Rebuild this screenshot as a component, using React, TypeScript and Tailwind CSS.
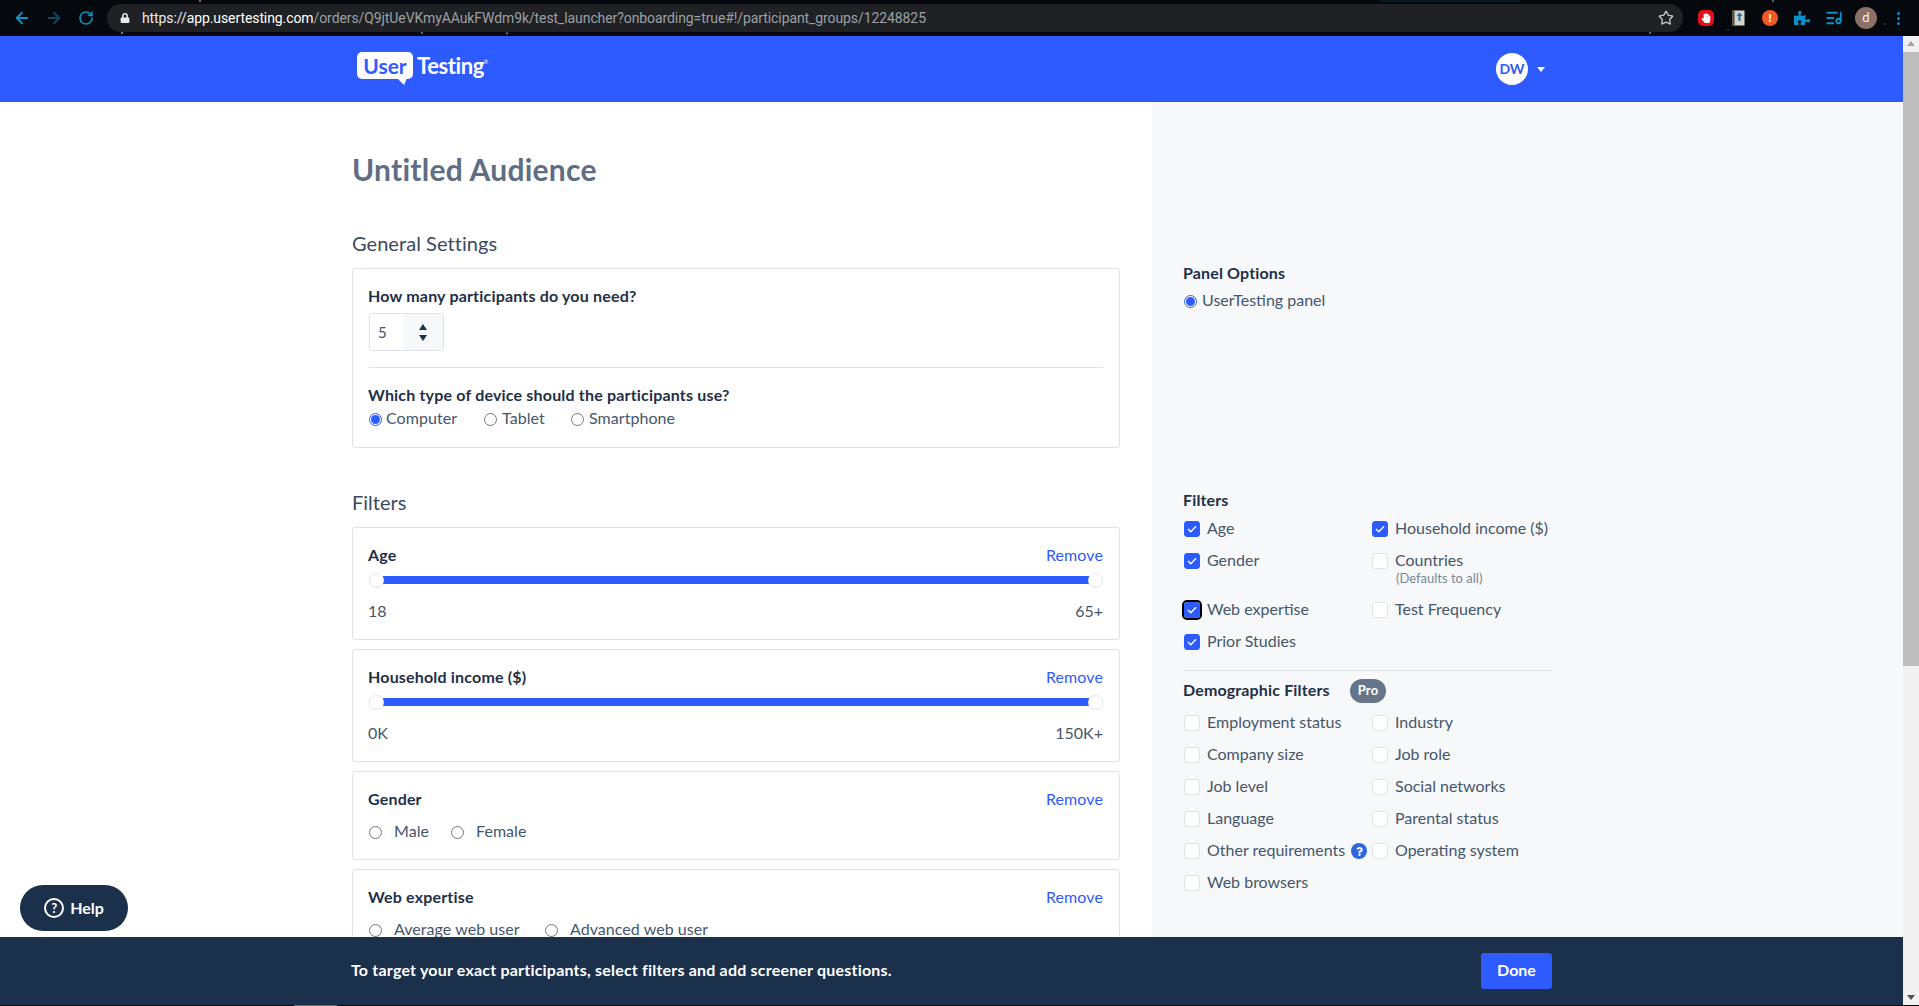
import React from "react";
import { ArrowLeft, ArrowRight, RotateCw, Star, ListMusic } from "lucide-react";
import { FaHandPaper, FaPuzzlePiece, FaLock, FaQuestion } from "react-icons/fa";

const font = "font-['Lato','Liberation_Sans',sans-serif]";

function Radio({ on = false }: { on?: boolean }) {
  return on ? (
    <span className="flex h-[13px] w-[13px] shrink-0 items-center justify-center rounded-full border border-[#2e5bff] bg-white">
      <span className="h-[9px] w-[9px] rounded-full bg-[#2e5bff]" />
    </span>
  ) : (
    <span className="h-[13px] w-[13px] shrink-0 rounded-full border border-[#6f7885] bg-white" />
  );
}

function Check({ on = false, focus = false }: { on?: boolean; focus?: boolean }) {
  return (
    <span
      className={`flex h-4 w-4 shrink-0 items-center justify-center rounded-[3px] border ${
        on ? "border-[#2e5bff] bg-[#2e5bff]" : "border-[#dfe3e9] bg-white"
      } ${focus ? "outline-2 outline-black outline-offset-0" : ""}`}
    >
      {on && (
        <svg width="10" height="8" viewBox="0 0 10 8" fill="none">
          <path d="M1 4l2.8 2.8L9 1.2" stroke="white" strokeWidth="1.3" />
        </svg>
      )}
    </span>
  );
}

function CheckRow({ label, on, focus, sub, help }: { label: string; on?: boolean; focus?: boolean; sub?: string; help?: boolean }) {
  return (
    <div>
      <div className="flex h-5 items-center">
        <Check on={on} focus={focus} />
        <span className="ml-[7px] pb-0.5 whitespace-nowrap text-[16px] leading-5 text-[#46566b]">{label}</span>
        {help && (
          <span className="absolute ml-[167px] flex h-4 w-4 items-center justify-center rounded-full bg-[#2e66e0] text-white">
            <FaQuestion size={9} />
          </span>
        )}
      </div>
      {sub && <div className="ml-6 h-4 -translate-y-px text-[13px] leading-4 text-[#7b8797]">{sub}</div>}
    </div>
  );
}

function Card({ title, children, remove = true, last = false, tall = false }: { title?: string; children: React.ReactNode; remove?: boolean; last?: boolean; tall?: boolean }) {
  return (
    <div className={`${last ? "" : "mb-[9px]"} rounded-[3px] border border-[#dfe3e9] bg-white px-4 pt-[18px] ${tall ? "pb-[18px]" : "pb-[17px]"}`}>
      {title && (
        <div className="flex h-5 items-center justify-between pb-0.5 text-[16px] leading-5">
          <span className="-ml-px font-bold tracking-[0.18px] text-[#1f3047]">{title}</span>
          {remove && <span className="tracking-[0.1px] text-[#2e5bff]">Remove</span>}
        </div>
      )}
      {children}
    </div>
  );
}

function Slider({ low, high }: { low: string; high: string }) {
  return (
    <>
      <div className="mt-1.5 flex h-4 items-center">
        <span className="z-10 h-[15px] w-[15px] shrink-0 rounded-full border border-[#dfe3e9] bg-white" />
        <span className="-mx-px h-2 flex-1 bg-[#2e5bff]" />
        <span className="z-10 h-[15px] w-[15px] shrink-0 rounded-full border border-[#dfe3e9] bg-white" />
      </div>
      <div className="mt-3.5 flex h-5 items-center justify-between pb-0.5 text-[16px] text-[#46566b]">
        <span className="-ml-px">{low}</span>
        <span>{high}</span>
      </div>
    </>
  );
}

function RadioOption({ label, on, width, gap = "ml-1" }: { label: string; on?: boolean; width: string; gap?: string }) {
  return (
    <div className={`flex items-center ${width}`}>
      <Radio on={on} />
      <span className={`${gap} pb-0.5 whitespace-nowrap text-[16px] tracking-[0.05px] text-[#46566b]`}>{label}</span>
    </div>
  );
}

function Slot({ children }: { children: React.ReactNode }) {
  return <span className="flex w-8 shrink-0 items-center justify-center">{children}</span>;
}

export default function App() {
  const demo: [string, boolean?][] = [
    ["Employment status"],
    ["Industry"],
    ["Company size"],
    ["Job role"],
    ["Job level"],
    ["Social networks"],
    ["Language"],
    ["Parental status"],
    ["Other requirements", true],
    ["Operating system"],
    ["Web browsers"],
  ];
  return (
    <div className={`flex h-[1006px] w-full flex-col overflow-hidden bg-[#05090e] ${font}`}>
      {/* Browser toolbar */}
      <div className="relative flex h-9 shrink-0 items-center bg-[#05090e]">
        <svg className="absolute inset-0" width="1919" height="36" viewBox="0 0 1919 36">
          <circle cx="200" cy="1" r="1" fill="#8a9299" />
          <circle cx="122" cy="33" r="1" fill="#9aa3aa" />
          <circle cx="422" cy="33" r="1" fill="#7d868d" />
          <circle cx="507" cy="33.5" r="1" fill="#8a9299" />
          <circle cx="1650" cy="33" r="1" fill="#7d868d" />
          <circle cx="1773" cy="1" r="1" fill="#71808a" />
          <circle cx="1840" cy="20" r="0.8" fill="#5a6a75" />
          <circle cx="1885" cy="24" r="0.8" fill="#5a6a75" />
          <circle cx="1728" cy="30" r="0.7" fill="#4d5d68" />
          <rect x="1380" y="0" width="140" height="2" fill="#0c2a33" opacity="0.6" />
        </svg>
        <div className="relative ml-[13px] flex w-[94px] items-center">
          <ArrowLeft size={18} strokeWidth={2.4} className="text-[#0f8fc4]" />
          <ArrowRight size={18} strokeWidth={2.4} className="ml-[14px] text-[#0b4a63]" />
          <RotateCw size={16} strokeWidth={2.4} className="ml-[15px] text-[#0f8fc4]" />
        </div>
        <div className="relative flex h-7 w-[1576px] items-center rounded-full bg-[#202124] pl-[13px] font-['Roboto',sans-serif] text-[14px] tracking-[-0.09px]">
          <FaLock size={10} className="text-[#e8eaed]" />
          <span className="ml-3 whitespace-nowrap">
            <span className="text-[#e8eaed]">https://</span>
            <span className="text-white">app.usertesting.com</span>
            <span className="text-[#9aa0a6]">/orders/Q9jtUeVKmyAAukFWdm9k/test_launcher?onboarding=true#!/participant_groups/12248825</span>
          </span>
          <Star size={16} className="mr-[9px] ml-auto text-[#c4c7c9]" />
        </div>
        <div className="relative ml-[7px] flex flex-1 items-center">
          <Slot>
            <span className="flex h-4 w-4 items-center justify-center rounded-[5px] bg-[#e3101a] text-white">
              <FaHandPaper size={10} />
            </span>
          </Slot>
          <Slot>
            <svg width="13" height="16" viewBox="0 0 13 16">
              <rect x="0.5" y="0.5" width="12" height="15" fill="#d9d3c4" />
              <rect x="0.5" y="0.5" width="2" height="15" fill="#4c4a44" />
              <path d="M7.5 2.5l3 3.5H8.5V11h-2V6H4.5z" fill="#0f6fb0" />
            </svg>
          </Slot>
          <Slot>
            <span className="flex h-4 w-4 items-center justify-center rounded-full bg-[#f15a24] text-[12px] font-bold text-white">!</span>
          </Slot>
          <Slot>
            <FaPuzzlePiece size={16} className="text-[#0a8fc9]" />
          </Slot>
          <Slot>
            <ListMusic size={18} strokeWidth={2.4} className="text-[#0a8fc9]" />
          </Slot>
          <Slot>
            <span className="flex h-[22px] w-[22px] items-center justify-center rounded-full bg-[#8d7065] text-[13px] text-[#f1ece9]">d</span>
          </Slot>
          <Slot>
            <span className="flex flex-col gap-[2px]">
              <span className="h-[3px] w-[3px] rounded-full bg-[#0a8fc9]" />
              <span className="h-[3px] w-[3px] rounded-full bg-[#0a8fc9]" />
              <span className="h-[3px] w-[3px] rounded-full bg-[#0a8fc9]" />
            </span>
          </Slot>
        </div>
      </div>

      <div className="flex min-h-0 flex-1">
        {/* Page */}
        <div className="relative flex min-w-0 flex-1 flex-col overflow-hidden bg-white">
          <header className="flex h-[66px] shrink-0 items-center bg-[#2e5bff] pr-[358px] pl-[357px]">
            <div className="relative mb-[7px] flex h-[27px] w-[56px] items-center justify-center rounded-[5px] bg-white">
              <span className="text-[21px] leading-none font-bold text-[#2e5bff]">User</span>
              <svg className="absolute right-[6px] -bottom-[6px]" width="10" height="7" viewBox="0 0 10 7">
                <path d="M0 0h10L7 7z" fill="white" />
              </svg>
            </div>
            <span className="mb-[7px] ml-1 text-[22px] font-bold tracking-[-0.4px] text-white">Testing</span>
            <span className="mb-[14px] text-[5px] leading-none text-white">®</span>
            <div className="ml-auto flex items-center">
              <span className="flex h-8 w-8 items-center justify-center rounded-full bg-white pb-0.5 text-[14px] font-bold text-[#2e5bff]">DW</span>
              <svg className="ml-[9px]" width="8" height="5" viewBox="0 0 8 5">
                <path d="M0 0h8L4 5z" fill="white" />
              </svg>
            </div>
          </header>

          <div className="flex min-h-0 flex-1">
            {/* Left column */}
            <div className="w-[1152px] shrink-0 overflow-hidden pr-[32px] pl-[352px]">
              <h1 className="mt-[47px] h-10 text-[30px] leading-10 font-bold tracking-[0.25px] text-[#5e6e84]">Untitled Audience</h1>
              <h2 className="mt-10 mb-[11px] h-7 text-[20px] leading-7 tracking-[0.05px] text-[#3c4a5e]">General Settings</h2>
              <Card last tall>
                <div className="-ml-px flex h-5 items-center pb-0.5 text-[16px] font-bold tracking-[0.18px] text-[#1f3047]">How many participants do you need?</div>
                <div className="mt-1.5 flex h-[38px] w-[75px] overflow-hidden rounded-[3px] border border-[#dfe3e9]">
                  <span className="flex w-[33px] items-center pl-2 text-[15px] text-[#46566b]">5</span>
                  <span className="flex flex-1 flex-col items-center justify-center gap-[5px] bg-[#f6f8fa]">
                    <svg width="8" height="6" viewBox="0 0 8 6"><path d="M4 0l4 6H0z" fill="#1f3047" /></svg>
                    <svg width="8" height="6" viewBox="0 0 8 6"><path d="M0 0h8L4 6z" fill="#1f3047" /></svg>
                  </span>
                </div>
                <div className="mt-4 h-px bg-[#dfe3e9]" />
                <div className="mt-[18px] -ml-px flex h-5 items-center pb-0.5 text-[16px] font-bold tracking-[0.18px] text-[#1f3047]">Which type of device should the participants use?</div>
                <div className="mt-[3px] flex h-5 items-center">
                  <RadioOption label="Computer" on width="w-[115px]" />
                  <RadioOption label="Tablet" width="w-[87px]" gap="ml-[5px]" />
                  <RadioOption label="Smartphone" width="w-[110px]" gap="ml-[5px]" />
                </div>
              </Card>

              <h2 className="mt-[41px] mb-2.5 h-7 pb-0.5 text-[20px] leading-[26px] text-[#3c4a5e]">Filters</h2>
              <Card title="Age">
                <Slider low="18" high="65+" />
              </Card>
              <Card title="Household income ($)">
                <Slider low="0K" high="150K+" />
              </Card>
              <Card title="Gender">
                <div className="mt-3 flex h-5 items-center">
                  <RadioOption label="Male" width="w-[82px]" gap="ml-3" />
                  <RadioOption label="Female" width="w-[100px]" gap="ml-3" />
                </div>
              </Card>
              <Card title="Web expertise" last>
                <div className="mt-3 flex h-5 items-center">
                  <RadioOption label="Average web user" width="w-[176px]" gap="ml-3" />
                  <RadioOption label="Advanced web user" width="w-[200px]" gap="ml-3" />
                </div>
              </Card>
            </div>

            {/* Right column */}
            <aside className="min-w-0 flex-1 bg-[#f6f8fa] pt-[162px] pl-8">
              <div className="-ml-px flex h-5 items-center pb-0.5 text-[16px] font-bold tracking-[0.15px] text-[#1f3047]">Panel Options</div>
              <div className="mt-[7px] flex h-5 items-center">
                <Radio on />
                <span className="ml-[5px] text-[16px] pb-0.5 text-[#46566b]">UserTesting panel</span>
              </div>

              <div className="mt-[180px] -ml-px flex h-5 items-center pb-0.5 text-[16px] font-bold tracking-[0.15px] text-[#1f3047]">Filters</div>
              <div className="mt-2 grid w-[368px] grid-cols-[188px_1fr] gap-y-3">
                <CheckRow label="Age" on />
                <CheckRow label="Household income ($)" on />
                <CheckRow label="Gender" on />
                <CheckRow label="Countries" sub="(Defaults to all)" />
                <div className="mt-px"><CheckRow label="Web expertise" on focus /></div>
                <div className="mt-px"><CheckRow label="Test Frequency" /></div>
                <CheckRow label="Prior Studies" on />
              </div>
              <div className="mt-[18px] h-px w-[368px] bg-[#dfe3e9]" />
              <div className="mt-2.5 -ml-px flex h-5 items-center text-[16px] font-bold tracking-[0.15px] text-[#1f3047]">
                <span className="w-[167px] pb-0.5">Demographic Filters</span>
                <span className="flex h-6 w-9 items-center justify-center rounded-full bg-[#66758a] text-[13px] font-bold text-white">Pro</span>
              </div>
              <div className="mt-3 grid w-[368px] grid-cols-[188px_1fr] gap-y-3">
                {demo.map(([label, help]) => (
                  <CheckRow key={label} label={label} help={help} />
                ))}
              </div>
            </aside>
          </div>

          {/* Help pill */}
          <div className="absolute bottom-[74px] left-5 flex h-[46px] w-[108px] items-center justify-center gap-1.5 rounded-full bg-[#1b304b] text-[16px] font-bold text-white">
            <span className="flex h-5 w-5 items-center justify-center rounded-full border-2 border-white text-[13px] leading-none">?</span>
            Help
          </div>

          {/* Bottom bar */}
          <div className="absolute right-0 bottom-0 left-0 flex h-[68px] items-center bg-[#1b304b] pr-[351px] pl-[352px]">
            <span className="-ml-px pb-0.5 text-[16px] font-bold tracking-[0.2px] text-white">To target your exact participants, select filters and add screener questions.</span>
            <span className="ml-auto flex h-9 w-[71px] items-center justify-center rounded-[3px] bg-[#2e5bff] pb-0.5 text-[16px] font-bold text-white">Done</span>
          </div>
        </div>

        {/* Scrollbar */}
        <div className="flex w-4 shrink-0 flex-col items-center bg-[#f1f1f1]">
          <svg className="mt-[5px]" width="8" height="5" viewBox="0 0 8 5"><path d="M4 0l4 5H0z" fill="#a3a3a3" /></svg>
          <div className="mt-1.5 h-[614px] w-full bg-[#bdbdbd]" />
          <svg className="mt-auto mb-[5px]" width="8" height="5" viewBox="0 0 8 5"><path d="M0 0h8L4 5z" fill="#505050" /></svg>
        </div>
      </div>
      <div className="h-px shrink-0 bg-[#05090e] pl-[294px]">
        <div className="h-px w-[43px] bg-[#6b6b6b]" />
      </div>
    </div>
  );
}
